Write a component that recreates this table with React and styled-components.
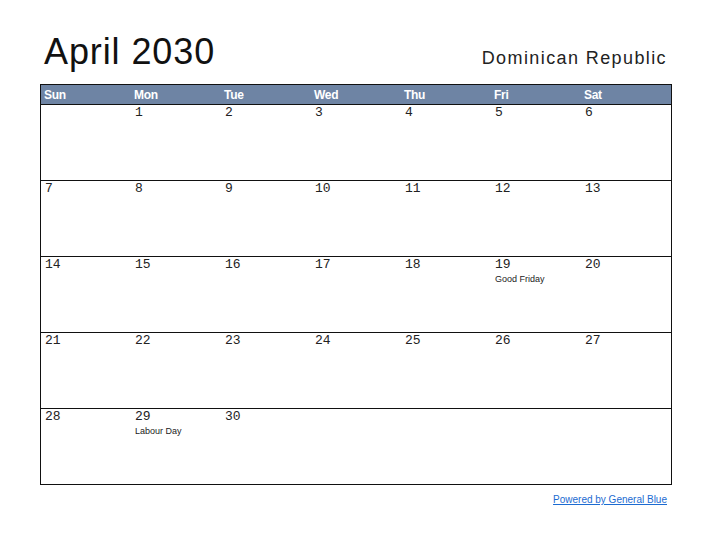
import React from 'react';
import styled, { createGlobalStyle } from 'styled-components';

const GlobalStyle = createGlobalStyle`
  html, body {
    margin: 0;
    padding: 0;
    background: #fff;
  }
`;

const Page = styled.div`
  width: 712px;
  height: 550px;
  padding: 0 40px;
  box-sizing: border-box;
  font-family: 'Liberation Sans', Arial, sans-serif;
`;

const TitleRow = styled.header`
  display: flex;
  justify-content: space-between;
  align-items: baseline;
  height: 84px;
  padding: 33px 5px 0 4px;
  box-sizing: border-box;
`;

const Title = styled.h1`
  margin: 0;
  font-size: 36px;
  font-weight: normal;
  color: #111;
  letter-spacing: 0.9px;
  line-height: 38px;
`;

const Country = styled.div`
  font-size: 18px;
  color: #222;
  letter-spacing: 1.4px;
`;

const Calendar = styled.div`
  border: 1px solid #111;
`;

const Grid = styled.div`
  display: grid;
  grid-template-columns: repeat(7, 1fr);
`;

const HeadCell = styled.div`
  background: #6e84a4;
  color: #fff;
  font-weight: bold;
  font-size: 12px;
  height: 19px;
  line-height: 20px;
  padding-left: 3px;
  letter-spacing: -0.3px;
  border-bottom: 1px solid #111;
`;

const DayCell = styled.div`
  height: 74px;
  padding: 1px 0 0 4px;
  box-sizing: content-box;
  border-bottom: ${(p) => (p.$last ? 'none' : '1px solid #111')};
`;

const DayNum = styled.div`
  font-family: 'Liberation Mono', 'Courier New', monospace;
  font-size: 13px;
  color: #222;
  line-height: 13px;
`;

const Holiday = styled.div`
  margin-top: 3px;
  font-size: 9px;
  color: #222;
`;

const Footer = styled.div`
  display: flex;
  justify-content: flex-end;
  padding: 9px 5px 0 0;
`;

const PoweredLink = styled.a`
  font-size: 10px;
  color: #1c6bd1;
  text-decoration: underline;
`;

const days = ['Sun', 'Mon', 'Tue', 'Wed', 'Thu', 'Fri', 'Sat'];
const holidays = { 19: 'Good Friday', 29: 'Labour Day' };

const cells = [];
for (let i = 0; i < 35; i += 1) {
  cells.push(i >= 1 && i <= 30 ? i : null);
}

export default function App() {
  return (
    <>
      <GlobalStyle />
      <Page>
        <TitleRow>
          <Title>April 2030</Title>
          <Country>Dominican Republic</Country>
        </TitleRow>
        <Calendar>
          <Grid>
            {days.map((d) => (
              <HeadCell key={d}>{d}</HeadCell>
            ))}
            {cells.map((n, i) => (
              <DayCell key={i} $last={i >= 28}>
                {n && <DayNum>{n}</DayNum>}
                {n && holidays[n] && <Holiday>{holidays[n]}</Holiday>}
              </DayCell>
            ))}
          </Grid>
        </Calendar>
        <Footer>
          <PoweredLink href="#">Powered by General Blue</PoweredLink>
        </Footer>
      </Page>
    </>
  );
}
